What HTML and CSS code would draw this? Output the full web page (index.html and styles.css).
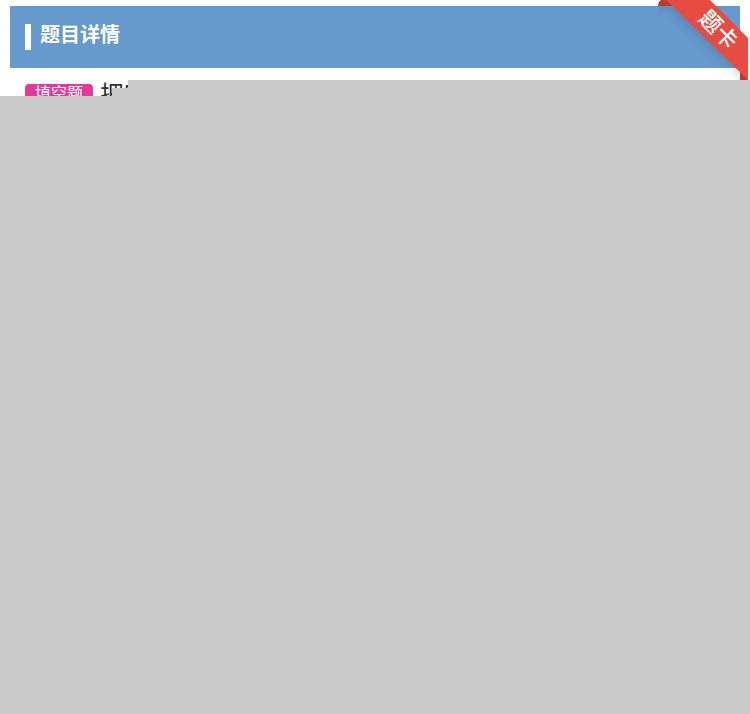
FILE: index.html
```
<!DOCTYPE html>
<html lang="zh-CN">
<head>
    <meta charset="UTF-8">
    <meta name="viewport" content="width=device-width, initial-scale=1.0">
    <title>题目详情</title>
    <link rel="stylesheet" href="styles.css">
</head>
<body>
    <main class="card">
        <header class="card-header">
            <h1>题目详情</h1>
        </header>
        <div class="question">
            <span class="tag">填空题</span>
            <p class="question-text">把吃</p>
        </div>
        <div class="ribbon">
            <svg class="ribbon-band" viewBox="0 0 92 80" aria-hidden="true">
                <path d="M0 6 Q0 2 3 0 H14 L20 6 Z" fill="#b93a31"/>
                <path d="M82 70 L90 78 V80 H82 Z" fill="#b93a31"/>
                <path d="M8 0 H52 L90 38 V80 Z" fill="#e74c43"/>
            </svg>
            <span class="ribbon-text">题卡</span>
        </div>
    </main>
    <div class="cover"></div>
</body>
</html>
```

FILE: styles.css
```
:root {
    --header-bg: #6699cc;
    --tag-bg: #e4399b;
    --cover-bg: #cacaca;
}

body {
    margin: 0;
    font-family: "Liberation Sans", "Noto Sans CJK SC", sans-serif;
    background-color: #fff;
    color: #333;
    min-height: 100vh;
    display: flex;
    flex-direction: column;
}

.card {
    padding: 6px 10px 0;
}

.card-header {
    background-color: var(--header-bg);
    padding: 18px 15px;
}

h1 {
    margin: 0;
    border-left: 6px solid #fff;
    padding-left: 9px;
    padding-bottom: 4px;
    font-size: 20px;
    line-height: 22px;
    color: #fff;
}

.question {
    display: flex;
    align-items: flex-start;
    gap: 7px;
    height: 28px;
    padding: 0 15px;
}

.tag {
    margin-top: 16px;
    padding: 0 10px;
    border-radius: 4px;
    background-color: var(--tag-bg);
    color: #fff;
    font-size: 16px;
    line-height: 20px;
}

.question-text {
    margin: 12px 0 0;
    font-size: 24px;
    line-height: 30px;
}

.ribbon {
    position: absolute;
    top: 0;
    right: 0;
    width: 92px;
    height: 80px;
    overflow: hidden;
}

.ribbon-band {
    display: block;
    width: 92px;
    height: 80px;
    filter: drop-shadow(-3px 3px 4px rgba(0, 0, 0, 0.1));
}

.ribbon-text {
    position: absolute;
    top: 15px;
    left: 38px;
    color: #fff;
    font-size: 22px;
    font-weight: 500;
    line-height: 30px;
    transform: rotate(45deg);
}

.cover {
    position: relative;
    flex: 1;
    background-color: var(--cover-bg);
}

/* stepped upper edge */
.cover::before {
    content: "";
    position: absolute;
    right: 0;
    bottom: 100%;
    left: 112px;
    height: 16px;
    background-color: var(--cover-bg);
    clip-path: polygon(0 8px, 16px 8px, 16px 0, 100% 0, 100% 100%, 0 100%);
}
```
